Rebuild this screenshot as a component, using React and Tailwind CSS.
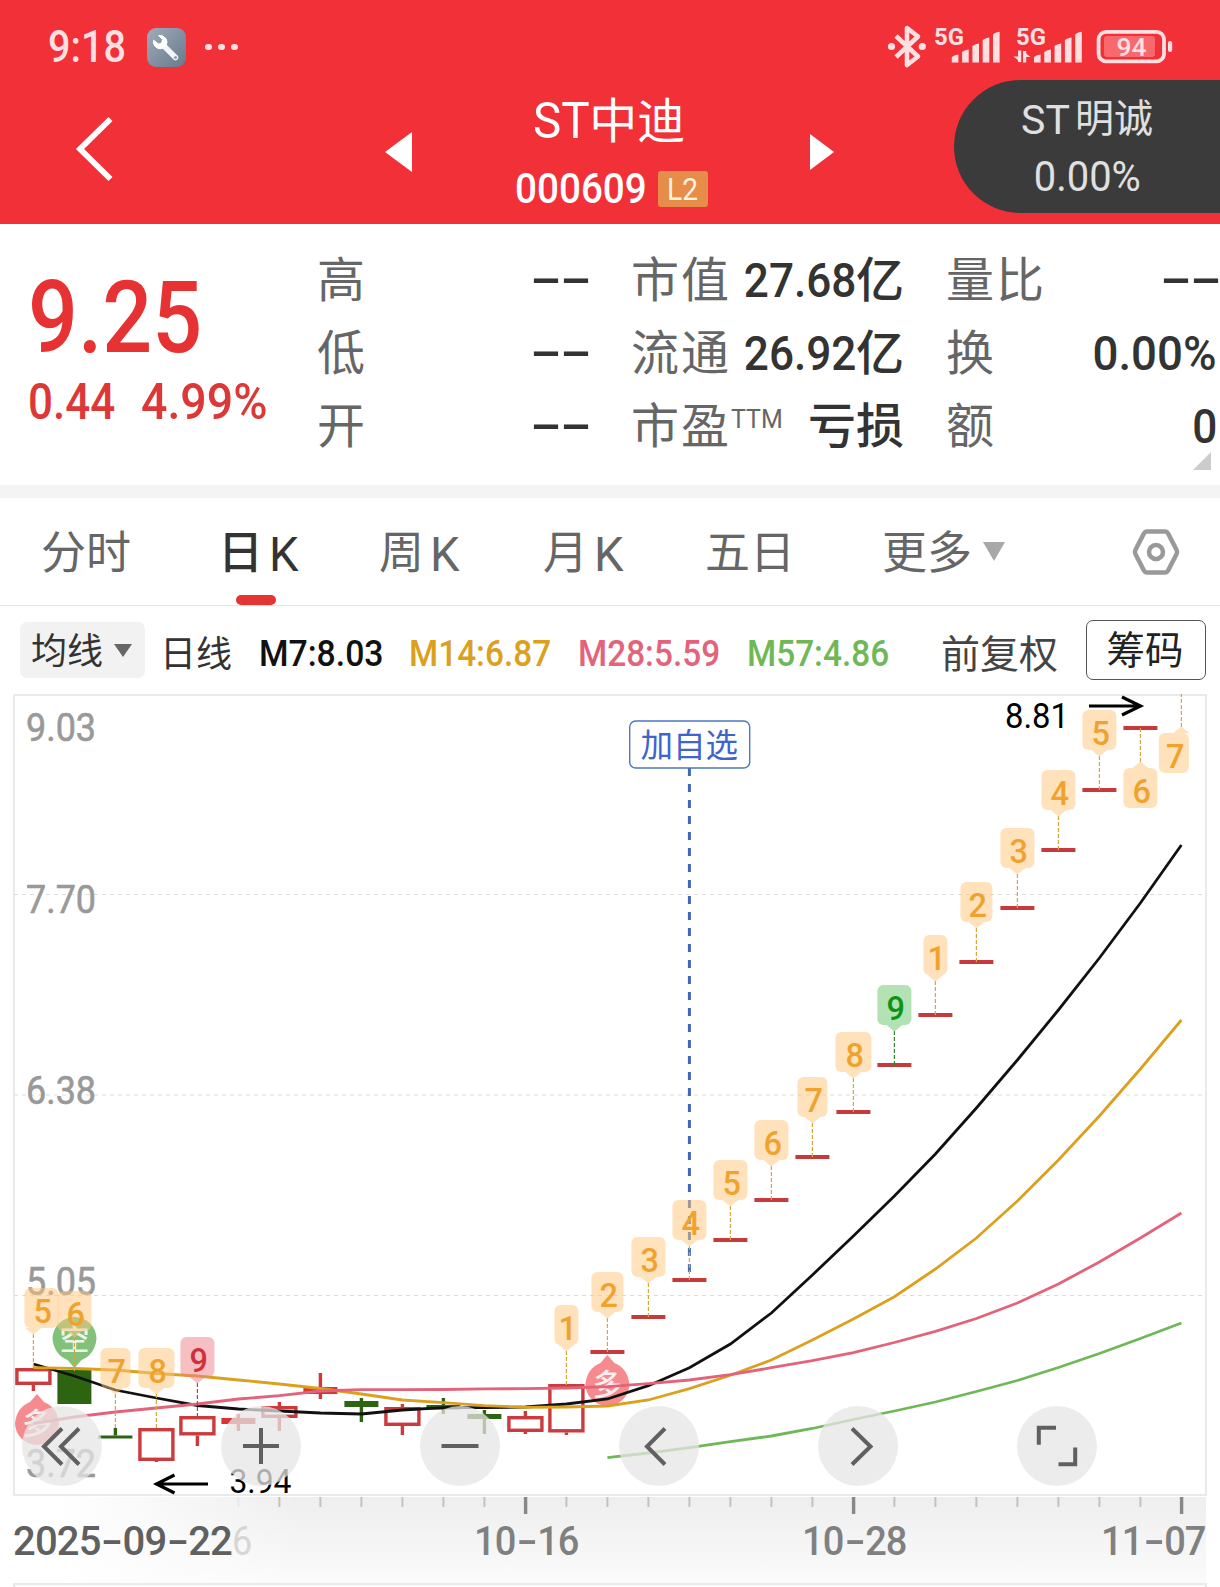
import { Fragment } from 'react';
import clsx from 'clsx';

const STEP = 41;
const cx = (i) => 33.4 + STEP * i;

// top / bottom: body, high / low: wick
const CANDLES = [
  { kind: 'hollow', top: 1368, bottom: 1385, high: 1368, low: 1391 },
  { kind: 'down', top: 1370, bottom: 1404, high: 1370, low: 1404 },
  { kind: 'down', top: 1435.5, bottom: 1438.5, high: 1428, low: 1438 },
  { kind: 'hollow', top: 1428, bottom: 1461, high: 1428, low: 1462 },
  { kind: 'hollow', top: 1416, bottom: 1435.5, high: 1416, low: 1446 },
  { kind: 'up', top: 1418, bottom: 1424, high: 1414, low: 1431 },
  { kind: 'hollow', top: 1406, bottom: 1418, high: 1402, low: 1431 },
  { kind: 'up', top: 1387, bottom: 1394, high: 1373, low: 1399 },
  { kind: 'down', top: 1401, bottom: 1407, high: 1398, low: 1422 },
  { kind: 'hollow', top: 1407, bottom: 1426, high: 1404, low: 1435 },
  { kind: 'down', top: 1405, bottom: 1409.5, high: 1398, low: 1414 },
  { kind: 'down', top: 1414, bottom: 1419, high: 1410, low: 1434 },
  { kind: 'hollow', top: 1416, bottom: 1432, high: 1411, low: 1434 },
  { kind: 'hollow', top: 1384, bottom: 1432.5, high: 1384, low: 1435 },
];

// limit-up days, index 14 onwards
const LIMIT_UPS = [1352, 1317, 1280, 1240, 1200, 1157, 1112, 1065, 1015, 962, 908, 850, 790, 728];

const BADGES = [
  { i: 0, n: 5, y: 1368, shift: 8 },
  { i: 1, n: 6, y: 1371 },
  { i: 2, n: 7, y: 1428 },
  { i: 3, n: 8, y: 1428 },
  { i: 4, n: 9, y: 1417, tone: 'red' },
  { i: 13, n: 1, y: 1385 },
  { i: 14, n: 2, y: 1352 },
  { i: 15, n: 3, y: 1317 },
  { i: 16, n: 4, y: 1280 },
  { i: 17, n: 5, y: 1240 },
  { i: 18, n: 6, y: 1200 },
  { i: 19, n: 7, y: 1157 },
  { i: 20, n: 8, y: 1112 },
  { i: 21, n: 9, y: 1065, tone: 'green' },
  { i: 22, n: 1, y: 1015 },
  { i: 23, n: 2, y: 962 },
  { i: 24, n: 3, y: 908 },
  { i: 25, n: 4, y: 850 },
  { i: 26, n: 5, y: 790 },
  { i: 27, n: 6, y: 728, below: true },
  { i: 28, n: 7, y: 693, below: true, shift: -7.5 },
];

const BADGE_WIDTH = { 1: 24, 2: 32, 3: 34, 4: 34, 5: 34, 6: 34, 7: 30, 8: 36, 9: 34 };

const TONES = {
  orange: { bg: '#ffc77b', text: '#f0a22e', line: '#d9a63c' },
  green: { bg: '#67c569', text: '#0d9413', line: '#2c8a2c' },
  red: { bg: '#ee8186', text: '#d0303a', line: '#a8474c' },
};

const AVERAGES = [
  {
    color: '#111111',
    from: 0,
    ys: [
      1364, 1376, 1390, 1398, 1405.5, 1409, 1411, 1413, 1414, 1410, 1407.7, 1407.7, 1407, 1404, 1399,
      1385.7, 1367.7, 1344, 1313, 1275, 1236, 1196, 1154, 1108, 1060, 1010, 958, 903, 845,
    ],
  },
  {
    color: '#dca01f',
    from: 0,
    ys: [
      1367.7, 1368.5, 1370, 1373.5, 1376, 1380, 1384, 1388.5, 1394, 1400, 1402.7, 1405.7, 1407.3, 1407,
      1406, 1400, 1388.7, 1375.3, 1360, 1340, 1319, 1296.7, 1269, 1238, 1201, 1160, 1116, 1069, 1020,
    ],
  },
  {
    color: '#e2637a',
    from: 0,
    ys: [
      1423.5, 1417, 1412, 1408, 1404, 1399, 1395.7, 1391, 1389.7, 1389.7, 1389.5, 1388.8, 1388.7, 1388,
      1386.7, 1383.7, 1380, 1374.7, 1367.7, 1360.7, 1352.6, 1342.5, 1331.3, 1318.5, 1303, 1284, 1262,
      1238, 1213,
    ],
  },
  {
    color: '#70b857',
    from: 14,
    ys: [
      1457.7, 1453, 1447.7, 1441.7, 1436, 1428.5, 1419.5, 1411, 1402, 1391.5, 1380.5, 1367.5, 1353.5,
      1338.5, 1323,
    ],
  },
];

const Y_LABELS = [
  ['9.03', 741],
  ['7.70', 913],
  ['6.38', 1104],
  ['5.05', 1295],
  ['3.72', 1477],
];

const TABS = [
  { label: '分时', className: 'w-[132px] pl-[41px]' },
  { label: '日', k: true, active: true, className: 'w-[157px] pl-[86px]' },
  { label: '周', k: true, className: 'w-[164px] pl-[90px]' },
  { label: '月', k: true, className: 'w-[160px] pl-[90px]' },
  { label: '五日', className: 'w-[182px] pl-[92px]' },
];

function StatusBar() {
  return (
    <div className="flex h-[80px] items-center pt-[14px] text-[#ffdfe0]">
      <span className="ml-[48px] w-[99px] text-[44px] leading-none font-medium">
        <span className="inline-block origin-left scale-x-[0.9]">9:18</span>
      </span>
      <span className="flex size-[39px] items-center justify-center rounded-[9px] bg-linear-to-br from-[#a0abba] to-[#687a8b]">
        <svg width="39" height="39" viewBox="0 0 39 39">
          <path d="M16 17 L28.5 29.5" stroke="#f2f5f9" strokeWidth="5.5" strokeLinecap="round" />
          <path
            d="M11.5 7.5 L15.5 11.5 L14.5 15.5 L11.5 16 L6.5 12.2 A7 7 0 0 0 13.5 20.8 A7.3 7.3 0 0 0 20 13.5 A7.3 7.3 0 0 0 11.5 7.5Z"
            fill="#fff"
            stroke="#fff"
            strokeLinejoin="round"
          />
          <circle cx="28.5" cy="29.5" r="1.6" fill="#8fa0b0" />
        </svg>
      </span>
      <span className="ml-[19px] flex gap-[6.5px]">
        <i className="size-[6.5px] rounded-full bg-[#ffdfe0]" />
        <i className="size-[6.5px] rounded-full bg-[#ffdfe0]" />
        <i className="size-[6.5px] rounded-full bg-[#ffdfe0]" />
      </span>
      <svg className="mr-[44px] ml-auto" width="290" height="50" viewBox="886 22 290 50" fill="#ffdfe0">
        <path
          d="M896 36 L918 56.5 L907 65 V28 L918 36.5 L896 57"
          fill="none"
          stroke="#ffdfe0"
          strokeWidth="4.6"
          strokeLinejoin="round"
        />
        <circle cx="891.5" cy="46.5" r="3.6" />
        <circle cx="922.3" cy="46.5" r="3.6" />
        <text x="934" y="45.3" fontSize="23" fontWeight="700" textLength="30" lengthAdjust="spacingAndGlyphs">5G</text>
        <text x="1016" y="45.3" fontSize="23" fontWeight="700" textLength="30" lengthAdjust="spacingAndGlyphs">5G</text>
        {[951.8, 1034].map((x) => (
          <Fragment key={x}>
            {[54.5, 49.5, 43.5, 37.5, 31.8].map((y, i) => (
              <path
                key={y}
                d={`M${x + i * 10.3} ${y + 2.5} Q${x + i * 10.3 + 3} ${y} ${x + i * 10.3 + 6.6} ${y} V62.5 H${x + i * 10.3}Z`}
              />
            ))}
          </Fragment>
        ))}
        <path d="M1019.6 50.5 V62 M1024.6 62.5 V51" fill="none" stroke="#ffdfe0" strokeWidth="3.2" />
        <path d="M1013.5 56.5 H1021 V62.5Z M1030.5 57 H1023 V51Z" />
        <rect x="1098.6" y="31.8" width="65.4" height="29.6" rx="7.5" fill="none" stroke="#ffdfe0" strokeWidth="3.8" />
        <rect x="1104" y="36" width="51" height="21" rx="3" fill="#f8696e" />
        <rect x="1168" y="41" width="4.2" height="11" rx="2" />
        <text x="1116.5" y="56" fontSize="26.5" fontWeight="500" textLength="30" lengthAdjust="spacingAndGlyphs">94</text>
      </svg>
    </div>
  );
}

function Header() {
  return (
    <header className="h-[224px] bg-[#f13038]">
      <StatusBar />
      <div className="flex h-[144px] items-start text-white">
        <svg className="mt-[33px] ml-[72px]" width="46" height="72" viewBox="72 113 46 72">
          <path d="M110.5 119 L80 149 L110.5 179" fill="none" stroke="#fff" strokeWidth="5.8" />
        </svg>
        <svg className="mt-[52px] ml-[267px]" width="27" height="40" viewBox="0 0 27 40">
          <path d="M27 0 V40 L0 20Z" fill="#fff" />
        </svg>
        <div className="flex w-[398px] flex-col items-center pt-[16px]">
          <h1 className="mr-[7px] text-[50px] leading-none whitespace-nowrap">
            <span className="inline-block origin-right scale-x-[0.95]">ST</span>
            <span className="text-[48px]">中迪</span>
          </h1>
          <div className="mt-[25px] mr-[3px] flex h-[36px] items-center">
            <span className="w-[143px] text-[42px] leading-none font-medium">
              <span className="inline-block origin-left scale-x-[0.92] whitespace-nowrap">000609</span>
            </span>
            <span className="-mr-[4px] flex h-[36px] w-[50px] items-center justify-center rounded-[3px] bg-[#e58d49] text-[32px] leading-none text-[#fff3e2]">
              <span className="inline-block scale-x-[0.88]">L2</span>
            </span>
          </div>
        </div>
        <svg className="mt-[54px]" width="24" height="36" viewBox="0 0 24 36">
          <path d="M0 0 V36 L24 18Z" fill="#fff" />
        </svg>
        <div className="ml-auto flex h-[133px] w-[266px] flex-col items-center rounded-l-full bg-[#3b3b3b] pt-[20px] text-[#e0e0e0]">
          <span className="flex gap-[5px] text-[39px] leading-none whitespace-nowrap">
            <span className="inline-block origin-right text-[41px]">ST</span>
            <span className="inline-block">明诚</span>
          </span>
          <span className="mt-[15px] text-[42px] leading-none">
            <span className="inline-block scale-x-[0.95]">0.00%</span>
          </span>
        </div>
      </div>
    </header>
  );
}

function Dashes() {
  return (
    <span className="inline-block w-[56px] text-right">
      <span className="relative top-[-2px] inline-flex gap-[8px]">
        <span className="inline-block w-[22px] text-center">
          <span className="inline-block scale-x-[1.95]">-</span>
        </span>
        <span className="inline-block w-[22px] text-center">
          <span className="inline-block scale-x-[1.95]">-</span>
        </span>
      </span>
    </span>
  );
}

function Num({ children, className = 'scale-x-[0.92]' }) {
  return <span className={clsx('inline-block origin-right', className)}>{children}</span>;
}

function Stat({ label, sup, children }) {
  return (
    <div className="flex h-[73px] items-center justify-between text-[48px] leading-none whitespace-nowrap">
      <span className="flex tracking-[2px] text-[#666]">
        {label}
        {sup && (
          <sup className="top-0 mt-[3px] w-[54px] text-[26px] leading-none tracking-normal">
            <span className="inline-block origin-left scale-x-[0.96]">{sup}</span>
          </sup>
        )}
      </span>
      <span className="font-medium text-[#333]">{children}</span>
    </div>
  );
}

function Quote() {
  return (
    <section className="relative flex h-[261px] bg-white pt-[20px]">
      <div className="w-[317px] pl-[28px] font-medium text-[#e63232]">
        <div className="mt-[23px] text-[101px] leading-none">
          <span className="inline-block origin-left scale-x-[0.87]">9.25</span>
        </div>
        <div className="mt-[9px] flex text-[50px] leading-none text-[#dc3838]">
          <span className="w-[113px]">
            <span className="inline-block origin-left scale-x-[0.88]">0.44</span>
          </span>
          <span className="inline-block origin-left scale-x-[0.93]">4.99%</span>
        </div>
      </div>
      <div className="w-[270px]">
        <Stat label="高"><Dashes /></Stat>
        <Stat label="低"><Dashes /></Stat>
        <Stat label="开"><Dashes /></Stat>
      </div>
      <div className="ml-[44px] w-[273px]">
        <Stat label="市值"><Num>27.68</Num>亿</Stat>
        <Stat label="流通"><Num>26.92</Num>亿</Stat>
        <Stat label="市盈" sup="TTM">亏损</Stat>
      </div>
      <div className="ml-[42px] w-[271px]">
        <Stat label="量比"><Dashes /></Stat>
        <Stat label="换"><Num className="scale-x-[0.95]">0.00%</Num></Stat>
        <Stat label="额"><Num>0</Num></Stat>
      </div>
      <svg className="absolute top-[228px] left-[1193px]" width="18" height="18" viewBox="0 0 18 18">
        <path d="M18 0 V18 H0Z" fill="#ccc" />
      </svg>
    </section>
  );
}

function Tabs() {
  return (
    <nav className="flex h-[108px] border-b border-[#e4e4e4] bg-white text-[45px] leading-none whitespace-nowrap text-[#666]">
      {TABS.map((tab) => (
        <div key={tab.label} className={clsx('flex flex-col justify-between pt-[33px]', tab.className)}>
          <span className={clsx('flex gap-[6px]', tab.active && 'font-medium text-[#333]')}>
            {tab.label}
            {tab.k && <span className="inline-block origin-left scale-x-[0.98] text-[48px] font-normal">K</span>}
          </span>
          {tab.active && <i className="ml-[18px] h-[10px] w-[40px] rounded-full bg-[#e53434]" />}
        </div>
      ))}
      <div className="flex pt-[33px] pl-[87px]">
        更多
        <svg className="mt-[11px] ml-[11px]" width="22" height="19" viewBox="0 0 22 19">
          <path d="M0 0 H22 L11 19Z" fill="#a8a8a8" />
        </svg>
      </div>
      <svg className="mt-[29px] ml-[125px]" width="52" height="50" viewBox="1130 527 52 50" fill="none" stroke="#999" strokeWidth="4.5" strokeLinejoin="round">
        <path d="M1146.5 531.5 H1165.5 Q1167 531.5 1168 533.3 L1176.6 550 Q1177.6 552 1176.6 554 L1168 570.7 Q1167 572.5 1165.5 572.5 H1146.5 Q1145 572.5 1144 570.7 L1135.4 554 Q1134.4 552 1135.4 550 L1144 533.3 Q1145 531.5 1146.5 531.5Z" />
        <circle cx="1156" cy="552" r="7" />
      </svg>
    </nav>
  );
}

function AverageRow() {
  return (
    <div className="flex h-[88px] items-start bg-white whitespace-nowrap">
      <span className="mt-[16px] ml-[20px] flex h-[56px] w-[125px] items-center rounded-[7px] bg-[#f2f2f2] pt-[3px] pl-[11px] text-[36px] leading-none text-[#333]">
        均线
        <svg className="-mt-[3px] ml-[11px]" width="18" height="13" viewBox="0 0 18 13">
          <path d="M0 0 H18 L9 13Z" fill="#666" />
        </svg>
      </span>
      <div className="flex pt-[29px] text-[37.5px] leading-none">
        <span className="ml-[15px] w-[99px] pt-[2px] text-[36px] text-[#333]">日线</span>
        <span className="w-[150px] font-medium text-[#111]">
          <span className="inline-block origin-left scale-x-[0.9]">M7:8.03</span>
        </span>
        <span className="w-[169px] font-medium text-[#dca01f]">
          <span className="inline-block origin-left scale-x-[0.89]">M14:6.87</span>
        </span>
        <span className="w-[169px] font-medium text-[#e2637a]">
          <span className="inline-block origin-left scale-x-[0.89]">M28:5.59</span>
        </span>
        <span className="w-[194px] font-medium text-[#70b857]">
          <span className="inline-block origin-left scale-x-[0.89]">M57:4.86</span>
        </span>
        <span className="pt-[1px] text-[39px] text-[#444]">前复权</span>
      </div>
      <span className="mt-[14px] mr-[14px] ml-auto flex h-[60px] w-[120px] items-center justify-center rounded-[7px] border border-[#555] pt-[2px] pr-[2px] text-[38.5px] leading-none text-[#222]">
        筹码
      </span>
    </div>
  );
}

function Candle({ i, kind, top, bottom, high, low }) {
  const x = cx(i);
  const color = kind === 'down' ? '#2c6412' : kind === 'up' ? '#d83434' : '#cb3b3d';
  return (
    <g stroke={color} strokeWidth="3.4" fill={color}>
      {high < top && <path d={`M${x} ${high} V${top}`} />}
      {low > bottom && <path d={`M${x} ${bottom} V${low}`} />}
      {kind === 'hollow' ? (
        <rect x={x - 16.5} y={top + 1.7} width="33" height={bottom - top - 3.4} fill="#fff" />
      ) : (
        <rect x={x - 17} y={top} width="34" height={bottom - top} stroke="none" />
      )}
    </g>
  );
}

function Badge({ i, n, y, shift = 0, below, tone = 'orange' }) {
  const x = cx(i);
  const w = BADGE_WIDTH[n];
  const c = TONES[tone];
  const left = x + shift - w / 2;
  const top = below ? y + 40 : y - 80;
  const tip = below
    ? `M${x - 8} ${top} L${x} ${top - 6.5} L${x + 8} ${top}Z`
    : `M${x - 8} ${top + 40} L${x} ${top + 46.5} L${x + 8} ${top + 40}Z`;
  return (
    <g>
      <path
        d={below ? `M${x} ${y} V${top - 6}` : `M${x} ${top + 46} V${y}`}
        stroke={c.line}
        strokeWidth="1.2"
        strokeDasharray="4 2"
      />
      <g fill={c.bg} opacity="0.5">
        <rect x={left} y={top} width={w} height="40" rx="6" />
        <path d={tip} />
      </g>
      <text x={x + shift + 1.3} y={top + 34.5} fontSize="32.5" fontWeight="500" textAnchor="middle" fill={c.text}>
        {n}
      </text>
    </g>
  );
}

function Signal({ x, y, label, up }) {
  const dir = up ? -1 : 1;
  return (
    <g>
      <path
        d={`M${x - 22} ${y} A22 22 0 0 ${up ? 0 : 1} ${x + 22} ${y} Q${x + 20} ${y + dir * 16} ${x + 7} ${y + dir * 21} L${x} ${y + dir * 29} L${x - 7} ${y + dir * 21} Q${x - 20} ${y + dir * 16} ${x - 22} ${y}Z`}
        fill={up ? '#f26a6e' : '#5fb053'}
        opacity="0.78"
      />
      <text x={x} y={y + 11} fontSize="30" fontWeight="500" textAnchor="middle" fill="#fff" opacity="0.85">
        {label}
      </text>
    </g>
  );
}

function Chart() {
  return (
    <svg className="block" width="1220" height="803" viewBox="0 694 1220 803">
      <rect x="14" y="695" width="1192" height="800" fill="#fff" stroke="#eaeaea" strokeWidth="2" />
      {[894.5, 1095, 1295.5].map((y) => (
        <path key={y} d={`M14 ${y} H1206`} stroke="#dcdcdc" strokeWidth="1.2" strokeDasharray="4 4" />
      ))}
      {Y_LABELS.map(([label, y]) => (
        <text
          key={label}
          x="26"
          y={y}
          fontSize="38.5"
          fill="#999"
          stroke="#999"
          strokeWidth="0.6"
          textLength="70"
          lengthAdjust="spacingAndGlyphs"
        >
          {label}
        </text>
      ))}
      <path d="M689.4 768 V1276" stroke="#4069b5" strokeWidth="3" strokeDasharray="8 8" />
      <rect x="629.7" y="721" width="120" height="47" rx="6" fill="#fff" stroke="#4c78c0" strokeWidth="1.4" />
      <text x="689.2" y="757" fontSize="32.5" textAnchor="middle" fill="#3d65cc">加自选</text>
      {CANDLES.map((candle, i) => (
        <Candle key={i} i={i} {...candle} />
      ))}
      {LIMIT_UPS.map((y, i) => (
        <rect key={y} x={cx(i + 14) - 17} y={y - 2} width="34" height="4" fill="#c63a3c" />
      ))}
      <Signal x={74.5} y={1339} label="空" />
      <Signal x={37} y={1423} label="多" up />
      <Signal x={607.4} y={1384} label="多" up />
      {AVERAGES.map((avg) => (
        <polyline
          key={avg.color}
          points={avg.ys.map((y, i) => `${cx(avg.from + i)},${y}`).join(' ')}
          fill="none"
          stroke={avg.color}
          strokeWidth="2.8"
        />
      ))}
      {BADGES.map((badge) => (
        <Badge key={badge.i} {...badge} />
      ))}
      <g fill="none" stroke="#000" strokeWidth="3.2">
        <path d="M1089 706 H1140 M1122 697 L1140.5 706 L1122 715" />
        <path d="M208 1484 H157 M174.5 1475 L156.5 1484 L174.5 1493" />
      </g>
      <text x="1005" y="728" fontSize="34.5" textLength="64" lengthAdjust="spacingAndGlyphs">8.81</text>
      <text x="229.5" y="1493" fontSize="34" textLength="62" lengthAdjust="spacingAndGlyphs">3.94</text>
    </svg>
  );
}

const TOOLS = [
  'M40 22.5 L22 40.5 L40 58.5 M57 22.5 L39 40.5 L57 58.5',
  'M22 40 H58 M40 22 V58',
  'M21.5 40 H58.5',
  'M46 22.5 L28 40.5 L46 58.5',
  'M34 22.5 L52.5 40.5 L34 58.5',
  'M39 21.8 H21.8 V38.8 M41.5 58.2 H58.2 V41.5',
];

function ChartTools() {
  return (
    <div className="absolute top-[712px] left-[22px] flex gap-[119px]">
      {TOOLS.map((d) => (
        <button key={d} className="size-[80px] rounded-full bg-[#e6e6e6]/75">
          <svg width="80" height="80" viewBox="0 0 80 80">
            <path d={d} fill="none" stroke="#606060" strokeWidth="4" />
          </svg>
        </button>
      ))}
    </div>
  );
}

function DateLabel({ value, className }) {
  return (
    <span className={clsx('flex leading-none', className)}>
      {value.split('-').map((part, i) => (
        <Fragment key={i}>
          {i > 0 && (
            <span className="flex w-[23px] justify-center">
              <span className="inline-block scale-x-[1.6]">-</span>
            </span>
          )}
          <span className="inline-block">{part}</span>
        </Fragment>
      ))}
    </span>
  );
}

function TimeAxis() {
  return (
    <div className="relative h-[86px] bg-linear-to-b from-[#eeeeee] to-[#fbfbfb]">
      <div className="absolute inset-y-0 left-0 w-[300px] bg-linear-to-r from-white from-20% to-transparent" />
      <div className="absolute inset-y-0 right-0 w-[14px] bg-white" />
      <svg className="absolute top-0 left-0" width="1220" height="18" viewBox="0 0 1220 18">
        {Array.from({ length: 24 }, (_, k) => k + 5).map((i) => {
          const major = i === 12 || i === 20 || i === 28;
          return (
            <rect
              key={i}
              x={cx(i) - (major ? 1.5 : 1)}
              y="0"
              width={major ? 3.4 : 2}
              height={major ? 17 : 10}
              fill={major ? '#888' : i === 5 ? '#e8e8e8' : '#c2c2c2'}
            />
          );
        })}
      </svg>
      <div className="relative flex pt-[25px] text-[40px] font-medium text-[#808080]">
        <DateLabel value="2025-09-22" className="ml-[13px] w-[219px] tracking-[-0.8px] text-[#606060]" />
        <span className="w-[242px] leading-none font-normal text-[#d6d6d6]">
          <span className="inline-block origin-left scale-x-90">6</span>
        </span>
        <DateLabel value="10-16" className="w-[328px] origin-left scale-x-[0.95] tracking-[-1px]" />
        <DateLabel value="10-28" className="w-[299px] origin-left scale-x-[0.95] tracking-[-1px]" />
        <DateLabel value="11-07" className="origin-left scale-x-[0.95] tracking-[-1px]" />
      </div>
    </div>
  );
}

export default function App() {
  return (
    <div className="h-[1587px] w-[1220px] overflow-hidden bg-white font-['Roboto','Noto_Sans_CJK_SC',sans-serif]">
      <Header />
      <Quote />
      <div className="h-[13px] bg-[#f4f4f4]" />
      <Tabs />
      <AverageRow />
      <div className="relative">
        <Chart />
        <ChartTools />
      </div>
      <TimeAxis />
      <div className="mr-[13px] ml-[13px] h-[10px] border-2 border-b-0 border-[#eaeaea] bg-[#fcfcfc]" />
    </div>
  );
}
